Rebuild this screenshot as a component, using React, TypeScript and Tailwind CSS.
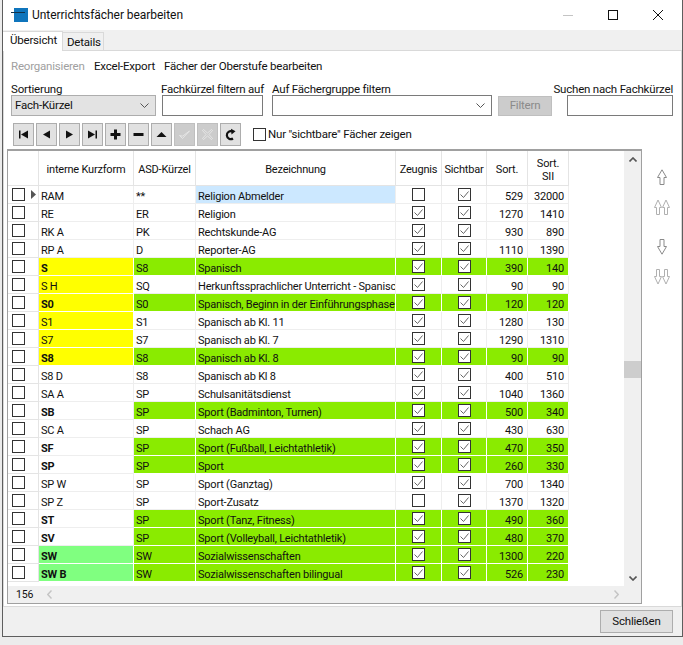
import React from 'react'

type Row = {
  code: string
  bold?: boolean
  codeBg?: 'yellow' | 'mint'
  asd: string
  name: string
  z: boolean
  s: boolean
  sort: number
  sort2: number
}

const rows: Row[] = [
  { code: 'RAM', asd: '**', name: 'Religion Abmelder', z: false, s: true, sort: 529, sort2: 32000 },
  { code: 'RE', asd: 'ER', name: 'Religion', z: true, s: true, sort: 1270, sort2: 1410 },
  { code: 'RK A', asd: 'PK', name: 'Rechtskunde-AG', z: true, s: true, sort: 930, sort2: 890 },
  { code: 'RP A', asd: 'D', name: 'Reporter-AG', z: true, s: true, sort: 1110, sort2: 1390 },
  { code: 'S', bold: true, codeBg: 'yellow', asd: 'S8', name: 'Spanisch', z: true, s: true, sort: 390, sort2: 140 },
  { code: 'S H', codeBg: 'yellow', asd: 'SQ', name: 'Herkunftssprachlicher Unterricht - Spanisch', z: true, s: true, sort: 90, sort2: 90 },
  { code: 'S0', bold: true, codeBg: 'yellow', asd: 'S0', name: 'Spanisch, Beginn in der Einführungsphase', z: true, s: true, sort: 120, sort2: 120 },
  { code: 'S1', codeBg: 'yellow', asd: 'S1', name: 'Spanisch ab Kl. 11', z: true, s: true, sort: 1280, sort2: 130 },
  { code: 'S7', codeBg: 'yellow', asd: 'S7', name: 'Spanisch ab Kl. 7', z: true, s: true, sort: 1290, sort2: 1310 },
  { code: 'S8', bold: true, codeBg: 'yellow', asd: 'S8', name: 'Spanisch ab Kl. 8', z: true, s: true, sort: 90, sort2: 90 },
  { code: 'S8 D', asd: 'S8', name: 'Spanisch ab Kl 8', z: true, s: true, sort: 400, sort2: 510 },
  { code: 'SA A', asd: 'SP', name: 'Schulsanitätsdienst', z: true, s: true, sort: 1040, sort2: 1360 },
  { code: 'SB', bold: true, asd: 'SP', name: 'Sport (Badminton, Turnen)', z: true, s: true, sort: 500, sort2: 340 },
  { code: 'SC A', asd: 'SP', name: 'Schach AG', z: true, s: true, sort: 430, sort2: 630 },
  { code: 'SF', bold: true, asd: 'SP', name: 'Sport (Fußball, Leichtathletik)', z: true, s: true, sort: 470, sort2: 350 },
  { code: 'SP', bold: true, asd: 'SP', name: 'Sport', z: true, s: true, sort: 260, sort2: 330 },
  { code: 'SP W', asd: 'SP', name: 'Sport (Ganztag)', z: true, s: true, sort: 700, sort2: 1340 },
  { code: 'SP Z', asd: 'SP', name: 'Sport-Zusatz', z: false, s: true, sort: 1370, sort2: 1320 },
  { code: 'ST', bold: true, asd: 'SP', name: 'Sport (Tanz, Fitness)', z: true, s: true, sort: 490, sort2: 360 },
  { code: 'SV', bold: true, asd: 'SP', name: 'Sport (Volleyball, Leichtathletik)', z: true, s: true, sort: 480, sort2: 370 },
  { code: 'SW', bold: true, codeBg: 'mint', asd: 'SW', name: 'Sozialwissenschaften', z: true, s: true, sort: 1300, sort2: 220 },
  { code: 'SW B', bold: true, codeBg: 'mint', asd: 'SW', name: 'Sozialwissenschaften bilingual', z: true, s: true, sort: 526, sort2: 230 },
]

function Box({ checked }: { checked?: boolean }) {
  return (
    <span className="w-[13px] h-[13px] border border-[#333] bg-white flex items-center justify-center shrink-0">
      {checked && (
        <svg width="11" height="11" viewBox="0 0 11 11" fill="none">
          <path d="M1.5 5.5 L4.5 8.5 L9.5 2.5" stroke="#666" strokeWidth="1" />
        </svg>
      )}
    </span>
  )
}

function NavButton({ children, off }: { children: React.ReactNode; off?: boolean }) {
  return (
    <div
      className={`w-[21px] h-[23px] border flex items-center justify-center ${
        off ? 'bg-[#cccccc] border-[#bfbfbf]' : 'bg-[#e1e1e1] border-[#adadad]'
      }`}
    >
      <svg width="13" height="13" viewBox="0 0 13 13">{children}</svg>
    </div>
  )
}

function SideArrow({ dir, dbl }: { dir: 'up' | 'down'; dbl?: boolean }) {
  const flip = dir === 'down' ? 'matrix(1 0 0 -1 0 16)' : undefined
  if (dbl) {
    return (
      <svg width="16" height="16" viewBox="0 0 16 16" fill="none" stroke="#b0b0b0" className="block">
        <g transform={flip}>
          <path d="M2.5 15.5 V8.5 H0.5 L4 1 L7.5 8.5 H5.5 V15.5 Z" />
          <path d="M10.5 15.5 V8.5 H8.5 L12 1 L15.5 8.5 H13.5 V15.5 Z" />
        </g>
      </svg>
    )
  }
  return (
    <svg width="10" height="16" viewBox="0 0 10 16" fill="none" stroke="#8a8a8a" className="block">
      <g transform={flip}>
        <path d="M3 15.5 V8.5 H0.5 L5 0.8 L9.5 8.5 H7 V15.5 Z" />
      </g>
    </svg>
  )
}

function DataRow({ r, first }: { r: Row; first: boolean }) {
  const colored = !!r.bold
  const line = colored ? 'border-white' : 'border-[#eeeeee]'
  const fill = colored ? 'bg-[#8aeb00]' : ''
  const codeFill =
    r.codeBg === 'yellow' ? 'bg-[#ffff00] border-white' : r.codeBg === 'mint' ? 'bg-[#80ff80] border-white' : 'border-[#eeeeee]'
  return (
    <div className="flex h-[18px] leading-[15px]">
      <div className="w-[31px] border-r border-b border-[#e4e4e4] pl-[4px] flex items-center relative">
        <Box />
        {first && (
          <svg className="absolute left-[23px] top-[4px]" width="5" height="9" viewBox="0 0 5 9">
            <path d="M0 0 L5 4.5 L0 9 Z" fill="#555" />
          </svg>
        )}
      </div>
      <div className={`w-[95px] border-r border-b pl-[2px] pt-[3px] ${codeFill} ${r.bold ? 'font-bold' : ''}`}>{r.code}</div>
      <div className={`w-[62px] border-r border-b pl-[2px] pt-[3px] ${line} ${fill}`}>{r.asd}</div>
      <div
        className={`w-[200px] border-r border-b pl-[2px] pt-[3px] overflow-hidden whitespace-nowrap ${line} ${
          first ? 'bg-[#cce8ff]' : fill
        }`}
      >
        {r.name}
      </div>
      <div className={`w-[46px] border-r border-b flex items-center justify-center ${line} ${fill}`}>
        <Box checked={r.z} />
      </div>
      <div className={`w-[45px] border-r border-b flex items-center justify-center ${line} ${fill}`}>
        <Box checked={r.s} />
      </div>
      <div className={`w-[41px] border-r border-b pr-[4px] pt-[3px] text-right ${line} ${fill}`}>{r.sort}</div>
      <div className={`w-[41px] border-r border-b pr-[4px] pt-[3px] text-right ${line} ${fill}`}>{r.sort2}</div>
    </div>
  )
}

export default function App() {
  return (
    <div className="w-[683px] h-[645px] bg-[#ececec] pl-[2px] font-['Roboto',sans-serif] text-[11.5px] tracking-[-0.2px] text-[#111] overflow-hidden">
      <div className="h-[637px] bg-[#f0f0f0] border-l border-r border-b border-[#5e5e5e] flex flex-col">
        {/* title bar */}
        <div className="h-[30px] bg-white flex items-center shrink-0 pl-[8px]">
          <svg width="18" height="15" viewBox="0 0 18 15" className="mr-[3px]">
            <rect x="3" y="0" width="14" height="14" fill="#0f75bc" />
            <rect x="0" y="4" width="14" height="1" fill="#12324a" />
          </svg>
          <span className="text-[12px] tracking-[-0.05px]">Unterrichtsfächer bearbeiten</span>
          <div className="ml-auto flex items-center gap-[35px] pr-[19px]">
            <svg width="10" height="10" viewBox="0 0 10 10">
              <path d="M0 5.5 H10" stroke="#c4c4c4" />
            </svg>
            <svg width="10" height="10" viewBox="0 0 10 10">
              <rect x="0.5" y="0.5" width="9" height="9" fill="none" stroke="#111" />
            </svg>
            <svg width="10" height="10" viewBox="0 0 10 10">
              <path d="M0 0 L10 10 M10 0 L0 10" stroke="#111" />
            </svg>
          </div>
        </div>

        {/* tabs */}
        <div className="h-[20px] flex items-end shrink-0 relative z-10">
          <div className="w-[60px] h-[20px] bg-white border-t border-r border-[#d9d9d9] pl-[7px] leading-[16px] -mb-px">Übersicht</div>
          <div className="w-[41px] h-[18px] border-t border-r border-[#d9d9d9] pl-[4px] leading-[19px]">Details</div>
        </div>

        {/* tab page */}
        <div className="h-[557px] bg-white border border-[#d9d9d9] shrink-0 flex flex-col pl-[3px]">
          <div className="h-[29px] flex items-center pl-[4px] pt-[3px] shrink-0">
            <span className="w-[83px] text-[#a0a0a0]">Reorganisieren</span>
            <span className="w-[70px]">Excel-Export</span>
            <span>Fächer der Oberstufe bearbeiten</span>
          </div>

          <div className="flex h-[36px] shrink-0 pl-[4px]">
            <div className="w-[150px] flex flex-col">
              <span className="h-[15px] leading-[18px]">Sortierung</span>
              <div className="w-[145px] h-[21px] bg-[#e3e3e3] border border-[#adadad] flex items-center justify-between pl-[3px] pr-[6px]">
                <span className="pt-px">Fach-Kürzel</span>
                <svg width="9" height="5" viewBox="0 0 9 5">
                  <path d="M0.5 0.5 L4.5 4.5 L8.5 0.5" fill="none" stroke="#555" />
                </svg>
              </div>
            </div>
            <div className="w-[111px] flex flex-col">
              <span className="h-[15px] leading-[18px] whitespace-nowrap">Fachkürzel filtern auf</span>
              <div className="w-[101px] h-[21px] border border-[#7a7a7a] ml-px" />
            </div>
            <div className="w-[226px] flex flex-col">
              <span className="h-[15px] leading-[18px] whitespace-nowrap">Auf Fächergruppe filtern</span>
              <div className="w-[220px] h-[21px] border border-[#7a7a7a] flex items-center justify-end pr-[6px]">
                <svg width="9" height="5" viewBox="0 0 9 5">
                  <path d="M0.5 0.5 L4.5 4.5 L8.5 0.5" fill="none" stroke="#555" />
                </svg>
              </div>
            </div>
            <div className="w-[58px] flex flex-col justify-end">
              <div className="w-[54px] h-[20px] bg-[#cccccc] border border-[#bfbfbf] text-[#8a8a8a] flex items-center justify-center">
                Filtern
              </div>
            </div>
            <div className="flex flex-col items-end w-[117px]">
              <span className="h-[15px] leading-[18px] whitespace-nowrap">Suchen nach Fachkürzel</span>
              <div className="w-[106px] h-[21px] border border-[#7a7a7a]" />
            </div>
          </div>

          {/* record navigator */}
          <div className="flex items-center h-[23px] mt-[7px] ml-[6px] gap-[2px] shrink-0">
            <NavButton>
              <path d="M2 2.5 H3.5 V10.5 H2 Z M11 2.5 V10.5 L4 6.5 Z" fill="#111" />
            </NavButton>
            <NavButton>
              <path d="M10 2.5 V10.5 L3 6.5 Z" fill="#111" />
            </NavButton>
            <NavButton>
              <path d="M3 2.5 V10.5 L10 6.5 Z" fill="#111" />
            </NavButton>
            <NavButton>
              <path d="M11 2.5 H9.5 V10.5 H11 Z M2 2.5 V10.5 L9 6.5 Z" fill="#111" />
            </NavButton>
            <NavButton>
              <path d="M5 1.5 H8 V5 H11.5 V8 H8 V11.5 H5 V8 H1.5 V5 H5 Z" fill="#111" />
            </NavButton>
            <NavButton>
              <rect x="1.5" y="5" width="10" height="3" fill="#111" />
            </NavButton>
            <NavButton>
              <path d="M1.5 9 L6.5 4 L11.5 9 Z" fill="#111" />
            </NavButton>
            <NavButton off>
              <path d="M1.5 7.5 L4.5 10.5 L11.5 3 L4.5 8.2 Z" fill="none" stroke="#e8e8e8" strokeWidth="0.9" />
            </NavButton>
            <NavButton off>
              <path d="M2.5 1.5 L6.5 5 L10.5 1.5 L11.5 2.5 L8 6.5 L11.5 10.5 L10.5 11.5 L6.5 8 L2.5 11.5 L1.5 10.5 L5 6.5 L1.5 2.5 Z" fill="none" stroke="#e8e8e8" strokeWidth="0.9" />
            </NavButton>
            <NavButton>
              <path d="M9 10.5 A4 4 0 1 1 8.5 3.5" fill="none" stroke="#111" strokeWidth="2.2" />
              <path d="M7 0.8 L11.5 3.2 L7.5 6.5 Z" fill="#111" />
            </NavButton>
            <label className="flex items-center gap-[2px] ml-[10px]">
              <Box />
              <span>Nur "sichtbare" Fächer zeigen</span>
            </label>
          </div>

          <div className="flex flex-1 min-h-0">
            {/* grid */}
            <div className="w-[635px] h-[455px] mt-[3px] border-2 border-[#a0a0a0] border-l border-b border-r bg-white flex flex-col shrink-0 text-[11px]">
              <div className="flex flex-1 min-h-0">
                <div className="w-[561px] shrink-0">
                  <div className="flex h-[35px] text-center">
                    <div className="w-[31px] border-r border-b border-[#e4e4e4]" />
                    <div className="w-[95px] border-r border-b border-[#e4e4e4] flex items-center justify-center pt-[5px]">interne Kurzform</div>
                    <div className="w-[62px] border-r border-b border-[#e4e4e4] flex items-center justify-center pt-[5px]">ASD-Kürzel</div>
                    <div className="w-[200px] border-r border-b border-[#e4e4e4] flex items-center justify-center pt-[5px]">Bezeichnung</div>
                    <div className="w-[46px] border-r border-b border-[#e4e4e4] flex items-center justify-center pt-[5px]">Zeugnis</div>
                    <div className="w-[45px] border-r border-b border-[#e4e4e4] flex items-center justify-center pt-[5px]">Sichtbar</div>
                    <div className="w-[41px] border-r border-b border-[#e4e4e4] flex items-center justify-center pt-[5px]">Sort.</div>
                    <div className="w-[41px] border-r border-b border-[#e4e4e4] flex flex-col items-center justify-center leading-[13px] pt-[3px]">
                      <span>Sort.</span>
                      <span>SII</span>
                    </div>
                  </div>
                  {rows.map((r, i) => (
                    <DataRow key={r.code} r={r} first={i === 0} />
                  ))}
                </div>
                <div className="flex-1" />
                <div className="w-[17px] bg-[#f0f0f0] shrink-0 flex flex-col items-center">
                  <svg className="mt-[6px]" width="8" height="5" viewBox="0 0 8 5">
                    <path d="M0.5 4.5 L4 1 L7.5 4.5" fill="none" stroke="#555" strokeWidth="1.6" />
                  </svg>
                  <div className="w-full h-[17px] bg-[#cdcdcd] mt-[199px]" />
                  <svg className="mt-[198px]" width="8" height="5" viewBox="0 0 8 5">
                    <path d="M0.5 0.5 L4 4 L7.5 0.5" fill="none" stroke="#555" strokeWidth="1.6" />
                  </svg>
                </div>
              </div>
              <div className="h-[17px] bg-[#f0f0f0] flex items-center shrink-0 pl-[8px] pr-[22px] text-[10.5px]">
                <span className="w-[31px]">156</span>
                <svg width="5" height="9" viewBox="0 0 5 9">
                  <path d="M4.5 0.5 L0.8 4.5 L4.5 8.5" fill="none" stroke="#c4c4c4" strokeWidth="1.4" />
                </svg>
                <svg className="ml-auto" width="5" height="9" viewBox="0 0 5 9">
                  <path d="M0.5 0.5 L4.2 4.5 L0.5 8.5" fill="none" stroke="#c4c4c4" strokeWidth="1.4" />
                </svg>
              </div>
            </div>

            {/* move buttons */}
            <div className="flex-1 flex flex-col items-center pt-[23px]">
              <SideArrow dir="up" />
              <div className="mt-[14px]">
                <SideArrow dir="up" dbl />
              </div>
              <div className="mt-[24px]">
                <SideArrow dir="down" />
              </div>
              <div className="mt-[14px]">
                <SideArrow dir="down" dbl />
              </div>
            </div>
          </div>
        </div>

        {/* footer */}
        <div className="flex-1 flex items-center justify-end pr-[9px]">
          <div className="w-[73px] h-[23px] bg-[#e1e1e1] border border-[#adadad] flex items-center justify-center">Schließen</div>
        </div>
      </div>
    </div>
  )
}
